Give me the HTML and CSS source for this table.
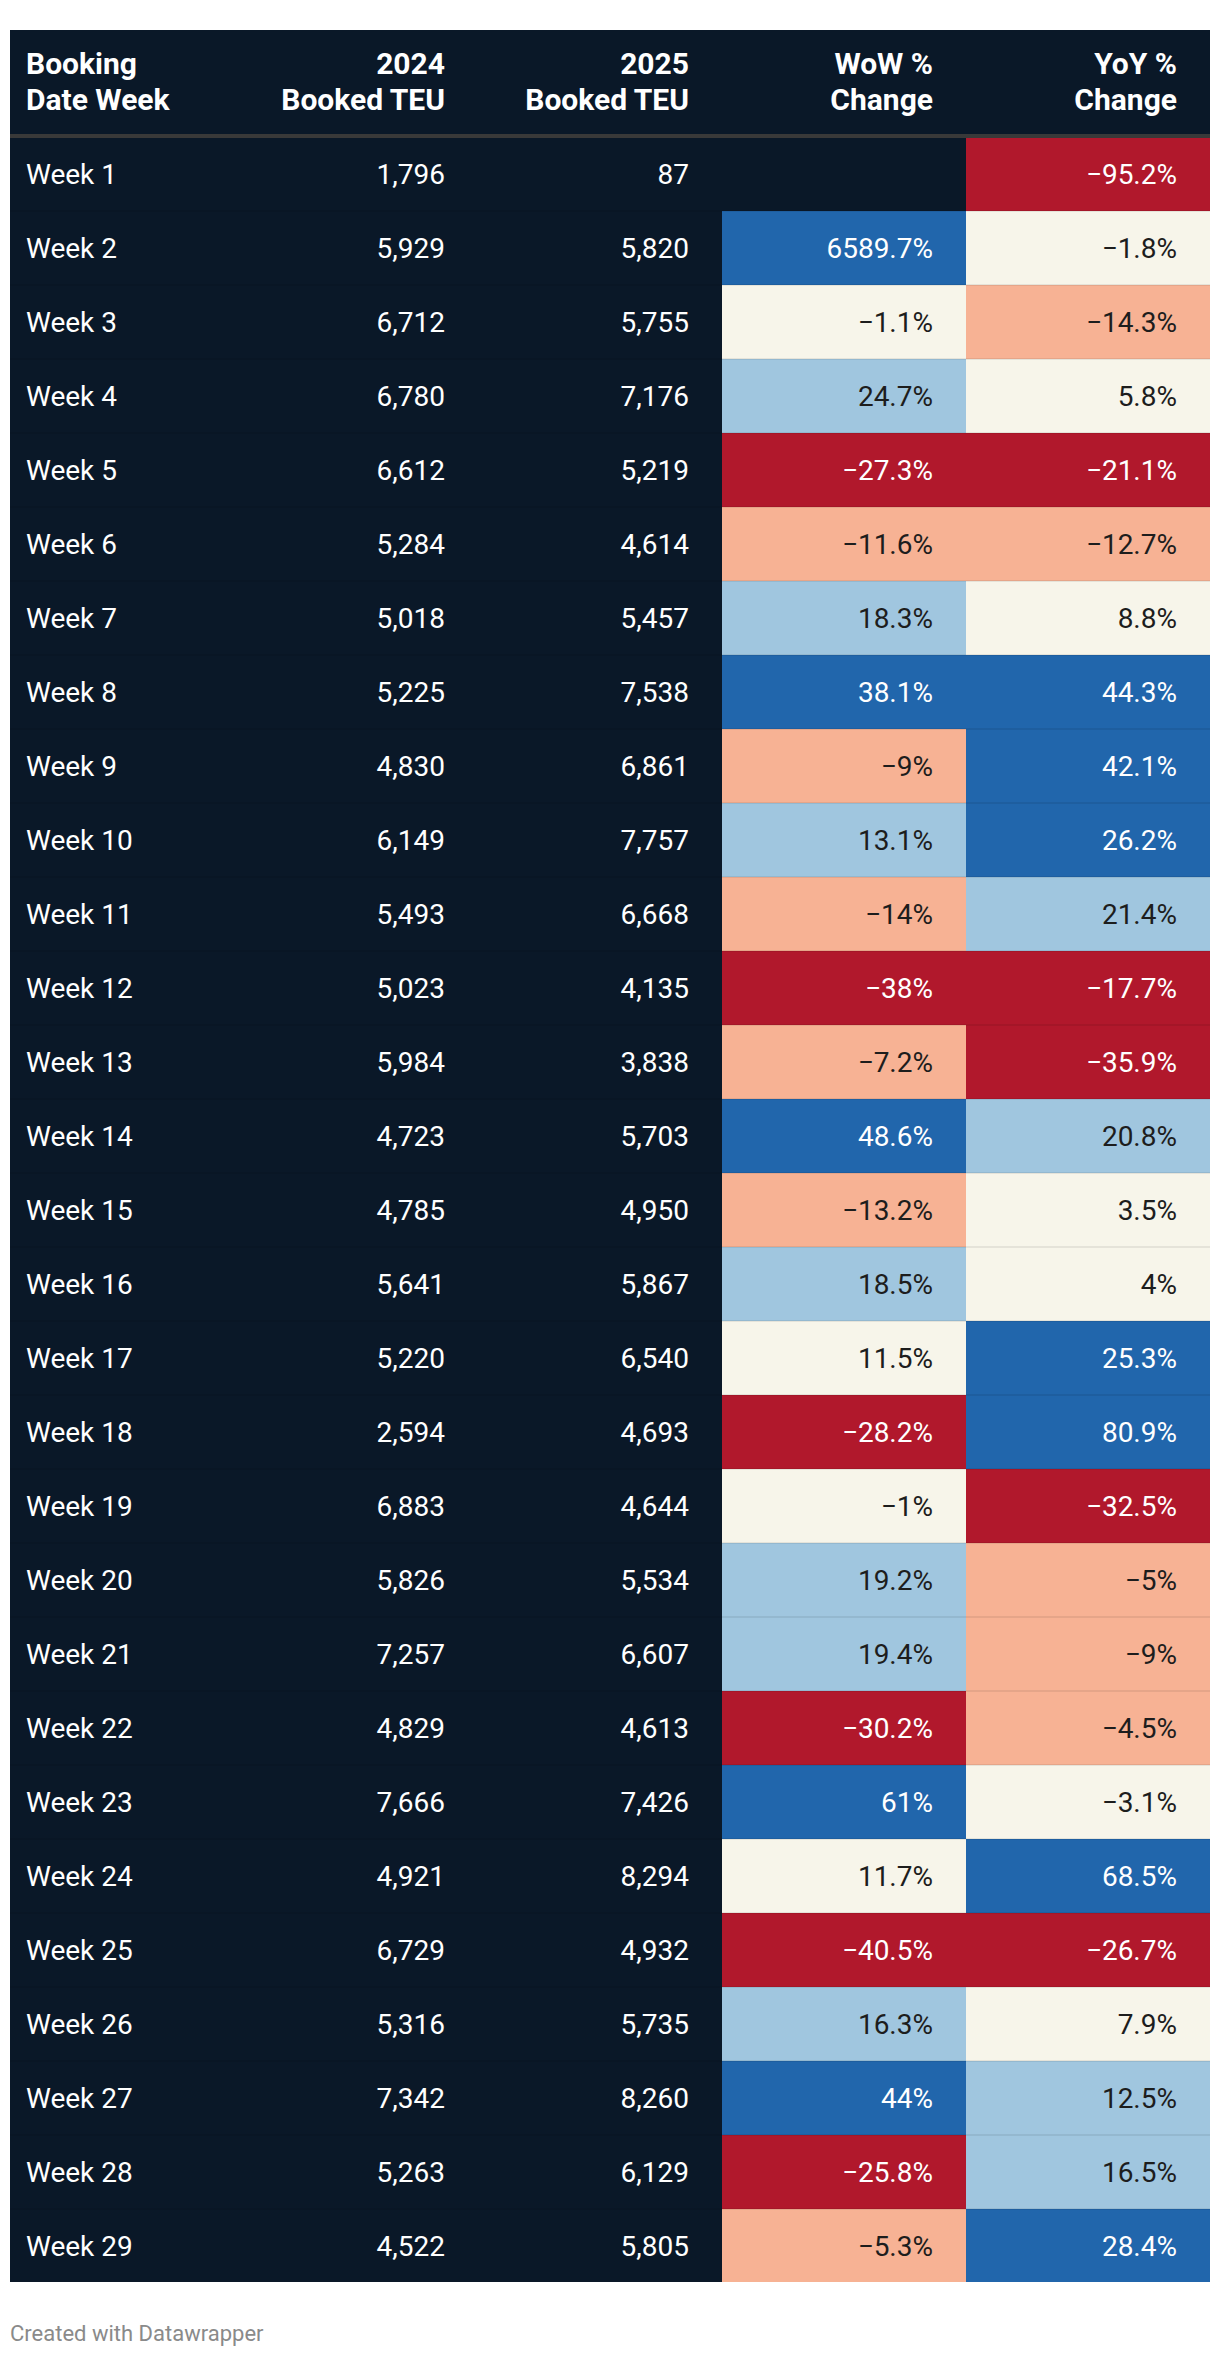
FILE: index.html
```html
<!DOCTYPE html>
<html lang="en">
<head>
<meta charset="utf-8">
<title>Booked TEU by Week</title>
<link rel="stylesheet" href="styles.css">
</head>
<body>
<div class="chart">
<table class="dw-table">
<colgroup>
<col class="c-week"><col class="c-num"><col class="c-num"><col class="c-num"><col class="c-num">
</colgroup>
<thead>
<tr>
<th class="left">Booking<br>Date Week</th>
<th>2024<br>Booked TEU</th>
<th>2025<br>Booked TEU</th>
<th>WoW %<br>Change</th>
<th>YoY %<br>Change</th>
</tr>
</thead>
<tbody>
<tr><td class="left">Week 1</td><td>1,796</td><td>87</td><td></td><td class="red">−95.2%</td></tr>
<tr><td class="left">Week 2</td><td>5,929</td><td>5,820</td><td class="blue">6589.7%</td><td class="cream">−1.8%</td></tr>
<tr><td class="left">Week 3</td><td>6,712</td><td>5,755</td><td class="cream">−1.1%</td><td class="salmon">−14.3%</td></tr>
<tr><td class="left">Week 4</td><td>6,780</td><td>7,176</td><td class="lblue">24.7%</td><td class="cream">5.8%</td></tr>
<tr><td class="left">Week 5</td><td>6,612</td><td>5,219</td><td class="red">−27.3%</td><td class="red">−21.1%</td></tr>
<tr><td class="left">Week 6</td><td>5,284</td><td>4,614</td><td class="salmon">−11.6%</td><td class="salmon">−12.7%</td></tr>
<tr><td class="left">Week 7</td><td>5,018</td><td>5,457</td><td class="lblue">18.3%</td><td class="cream">8.8%</td></tr>
<tr><td class="left">Week 8</td><td>5,225</td><td>7,538</td><td class="blue">38.1%</td><td class="blue">44.3%</td></tr>
<tr><td class="left">Week 9</td><td>4,830</td><td>6,861</td><td class="salmon">−9%</td><td class="blue">42.1%</td></tr>
<tr><td class="left">Week 10</td><td>6,149</td><td>7,757</td><td class="lblue">13.1%</td><td class="blue">26.2%</td></tr>
<tr><td class="left">Week 11</td><td>5,493</td><td>6,668</td><td class="salmon">−14%</td><td class="lblue">21.4%</td></tr>
<tr><td class="left">Week 12</td><td>5,023</td><td>4,135</td><td class="red">−38%</td><td class="red">−17.7%</td></tr>
<tr><td class="left">Week 13</td><td>5,984</td><td>3,838</td><td class="salmon">−7.2%</td><td class="red">−35.9%</td></tr>
<tr><td class="left">Week 14</td><td>4,723</td><td>5,703</td><td class="blue">48.6%</td><td class="lblue">20.8%</td></tr>
<tr><td class="left">Week 15</td><td>4,785</td><td>4,950</td><td class="salmon">−13.2%</td><td class="cream">3.5%</td></tr>
<tr><td class="left">Week 16</td><td>5,641</td><td>5,867</td><td class="lblue">18.5%</td><td class="cream">4%</td></tr>
<tr><td class="left">Week 17</td><td>5,220</td><td>6,540</td><td class="cream">11.5%</td><td class="blue">25.3%</td></tr>
<tr><td class="left">Week 18</td><td>2,594</td><td>4,693</td><td class="red">−28.2%</td><td class="blue">80.9%</td></tr>
<tr><td class="left">Week 19</td><td>6,883</td><td>4,644</td><td class="cream">−1%</td><td class="red">−32.5%</td></tr>
<tr><td class="left">Week 20</td><td>5,826</td><td>5,534</td><td class="lblue">19.2%</td><td class="salmon">−5%</td></tr>
<tr><td class="left">Week 21</td><td>7,257</td><td>6,607</td><td class="lblue">19.4%</td><td class="salmon">−9%</td></tr>
<tr><td class="left">Week 22</td><td>4,829</td><td>4,613</td><td class="red">−30.2%</td><td class="salmon">−4.5%</td></tr>
<tr><td class="left">Week 23</td><td>7,666</td><td>7,426</td><td class="blue">61%</td><td class="cream">−3.1%</td></tr>
<tr><td class="left">Week 24</td><td>4,921</td><td>8,294</td><td class="cream">11.7%</td><td class="blue">68.5%</td></tr>
<tr><td class="left">Week 25</td><td>6,729</td><td>4,932</td><td class="red">−40.5%</td><td class="red">−26.7%</td></tr>
<tr><td class="left">Week 26</td><td>5,316</td><td>5,735</td><td class="lblue">16.3%</td><td class="cream">7.9%</td></tr>
<tr><td class="left">Week 27</td><td>7,342</td><td>8,260</td><td class="blue">44%</td><td class="lblue">12.5%</td></tr>
<tr><td class="left">Week 28</td><td>5,263</td><td>6,129</td><td class="red">−25.8%</td><td class="lblue">16.5%</td></tr>
<tr><td class="left">Week 29</td><td>4,522</td><td>5,805</td><td class="salmon">−5.3%</td><td class="blue">28.4%</td></tr>
</tbody>
</table>
<div class="footer">Created with Datawrapper</div>
</div>
</body>
</html>
```
FILE: styles.css
```css
html, body {
  margin: 0;
  padding: 0;
  background: #ffffff;
}

body {
  font-family: Roboto, "Liberation Sans", Arial, sans-serif;
}

.chart {
  padding: 30px 10px 0 10px;
}

.dw-table {
  width: 1200px;
  table-layout: fixed;
  border-collapse: collapse;
  border-spacing: 0;
  background: #0a1828;
  color: #ffffff;
  font-size: 28px;
  line-height: 36px;
}

.c-week { width: 224px; }
.c-num { width: 244px; }

.dw-table th {
  font-size: 30px;
  font-weight: 700;
  line-height: 36px;
  text-align: right;
  vertical-align: bottom;
  padding: 16px 33px 16px 16px;
  border-bottom: 4px solid #393939;
}

.dw-table td {
  font-weight: 400;
  text-align: right;
  padding: 19px 33px 17px 16px;
  white-space: nowrap;
}

.dw-table tbody tr + tr td {
  border-top: 2px solid rgba(0, 0, 0, 0.07);
}

.dw-table .left {
  text-align: left;
}

.dw-table td.red {
  background: #b1182c;
  color: #ffffff;
}

.dw-table td.blue {
  background: #2166ac;
  color: #ffffff;
}

.dw-table td.lblue {
  background: #a0c6df;
  color: #1d1d1d;
}

.dw-table td.salmon {
  background: #f7b294;
  color: #1d1d1d;
}

.dw-table td.cream {
  background: #f7f5ea;
  color: #1d1d1d;
}

.footer {
  margin-top: 39px;
  font-size: 22px;
  line-height: 26px;
  color: #8a8a8a;
}
```
